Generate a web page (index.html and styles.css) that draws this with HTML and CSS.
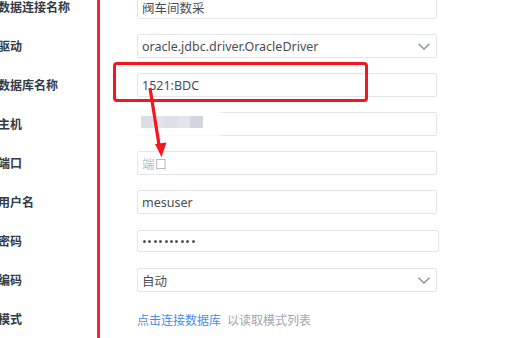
FILE: index.html
```html
<html>
<head>
	<link rel="stylesheet" href="styles.css">
</head>
<body>

	<div class="page">
		<div class="form">
			<div class="row">
				<span class="label">数据连接名称</span>
				<div class="input">阀车间数采</div>
			</div>
			<div class="row">
				<span class="label">驱动</span>
				<div class="input select">oracle.jdbc.driver.OracleDriver
					<svg class="chev" width="12" height="7" viewBox="0 0 12 7"><path d="M0.5 0.8 L6 6 L11.5 0.8" fill="none" stroke="#8c909a" stroke-width="1.3"/></svg>
				</div>
			</div>
			<div class="row">
				<span class="label">数据库名称</span>
				<div class="input">1521:BDC</div>
			</div>
			<div class="row">
				<span class="label">主机</span>
				<div class="input host">
					<!-- host address blurred out -->
					<div class="smudge">
						<span class="b1"></span><span class="b2"></span><span class="b3"></span><span class="b4"></span><span class="b5"></span>
					</div>
				</div>
			</div>
			<div class="row">
				<span class="label">端口</span>
				<div class="input placeholder">端口</div>
			</div>
			<div class="row">
				<span class="label">用户名</span>
				<div class="input">mesuser</div>
			</div>
			<div class="row">
				<span class="label">密码</span>
				<div class="input password">
					<span class="dot"></span><span class="dot"></span><span class="dot"></span><span class="dot"></span><span class="dot"></span>
					<span class="dot"></span><span class="dot"></span><span class="dot"></span><span class="dot"></span><span class="dot"></span>
				</div>
			</div>
			<div class="row">
				<span class="label">编码</span>
				<div class="input select">自动
					<svg class="chev" width="12" height="7" viewBox="0 0 12 7"><path d="M0.5 0.8 L6 6 L11.5 0.8" fill="none" stroke="#8c909a" stroke-width="1.3"/></svg>
				</div>
			</div>
			<div class="row">
				<span class="label">模式</span>
				<div class="hint"><a class="link">点击连接数据库</a><span class="muted">以读取模式列表</span></div>
			</div>
		</div>

		<!-- red annotations drawn on top of the screenshot -->
		<div class="mark-line"></div>
		<div class="mark-box"></div>
		<svg class="mark-arrow" width="511" height="338" viewBox="0 0 511 338">
			<line x1="150" y1="88" x2="159.5" y2="148" stroke="#f5161b" stroke-width="3.2"/>
			<polygon points="155,144 166.5,142.5 161.5,157" fill="#f5161b"/>
		</svg>
	</div>

</body>
</html>
```

FILE: styles.css
```css
body{margin:0; background:#fff; overflow:hidden; font-family:"Noto Sans","Noto Sans CJK SC",sans-serif;}
.page{position:relative; width:511px; height:338px; overflow:hidden;}
.form{display:flex; flex-direction:column; gap:15px; margin-top:-5px; margin-left:-2px;}
.row{display:grid; grid-template-columns:139px 300px; align-items:center; height:24px;}
.label{font-size:12px; font-weight:600; color:#333a44; white-space:nowrap;}
.input{position:relative; box-sizing:border-box; height:24px; border:1px solid #e3e5ea; border-radius:2px; padding-left:4px; display:flex; align-items:center; font-size:12.5px; color:#484d55;}
.select{padding-right:6px;}
.chev{position:absolute; right:6px; top:8px;}
.placeholder{color:#b7bbc4;}
.password{width:302px; height:22px; gap:2.4px; padding-left:5px;}
.dot{width:3px; height:3px; border-radius:50%; background:#4d5560;}
.host{overflow:visible;}
.smudge{position:absolute; left:-10px; top:-3px; width:90px; height:24px; background:#fff; box-shadow:0 0 4px 3px #fff; display:flex; align-items:center; padding-left:13px; box-sizing:border-box;}
.smudge span{height:12px; filter:blur(0.6px);}
.b1{width:11px; background:#dcdde3;}
.b2{width:12px; background:#e3e4e9;}
.b3{width:14px; background:#dfe0e6;}
.b4{width:12px; background:#e4e5ea;}
.b5{width:13px; background:#d3d6de;}
.hint{font-size:12px; display:flex; gap:6px; padding-top:2px;}
.link{color:#3d8ef5;}
.muted{color:#a2a5ab;}
.mark-line{position:absolute; left:97px; top:0; width:3px; height:338px; background:#f7262a;}
.mark-box{position:absolute; left:113px; top:62px; width:255px; height:40px; box-sizing:border-box; border:3px solid #f5161b; border-radius:4px;}
.mark-arrow{position:absolute; left:0; top:0;}
```
